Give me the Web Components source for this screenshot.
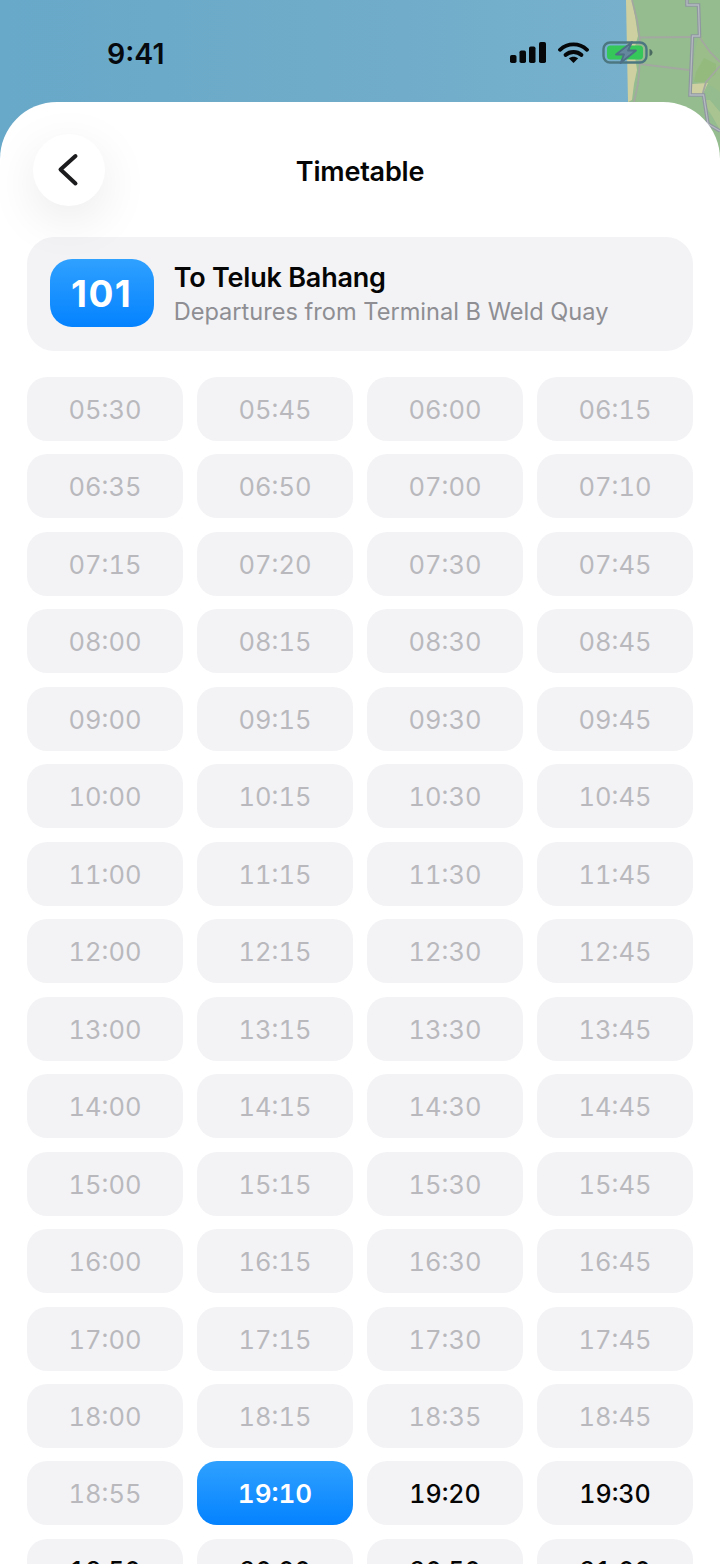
<!DOCTYPE html>
<html lang="en">
<head>
<meta charset="utf-8">
<title>Timetable</title>
<style>
  html, body { margin: 0; padding: 0; background: #fff; }
  body { font-family: Inter, "Noto Sans", sans-serif; }
</style>
</head>
<body>
<timetable-screen>
  <status-bar slot="status" time="9:41"></status-bar>
  <bottom-sheet slot="sheet">
    <sheet-nav title="Timetable"></sheet-nav>
    <route-card number="101" heading="To Teluk Bahang" detail="Departures from Terminal B Weld Quay"></route-card>
    <time-grid></time-grid>
  </bottom-sheet>
</timetable-screen>

<script>
// map behind the status bar, drawn in page coordinates
const mapSvg = `
<svg class="map" viewBox="0 0 720 190" width="720" height="190" aria-hidden="true">
  <defs>
    <linearGradient id="sea" x1="0" x2="1" y1="0" y2="0">
      <stop offset="0" stop-color="#68a8c8"/>
      <stop offset="1" stop-color="#78b1cc"/>
    </linearGradient>
  </defs>
  <rect width="720" height="190" fill="url(#sea)"/>
  <path d="M628 0H720V190H628Z" fill="#94bc8e"/>
  <path d="M626 0L632 0L635 16L638 36L634 50L637 70L634 84L632 100L628 102Z" fill="#cfd0a2"/>
  <path d="M700 30L706 46L712 52L720 60V92L708 84L700 86L694 80L692 72L696 46Z" fill="#a2bf85" opacity=".4"/>
  <path d="M696 72L704 58L716 64L716 74L704 82L694 82Z" fill="#92ba78" opacity=".7"/>
  <path d="M692 84L708 83L702 96L690 94Z" fill="#cfd0a2"/>
  <path d="M702 100L712 116L720 130V112L710 100Z" fill="#a9c391"/>
  <g fill="none" stroke="#a3a8a0" stroke-width="1.800">
    <path d="M632 0L637 20L640 40L640 62L638 84L634 102"/>
    <path d="M640 37.500L692 37"/>
    <path d="M640 64L689 70"/>
    <path d="M700 38L710 52L720 62"/>
    <path d="M720 66L706 82L702 96"/>
  </g>
  <path d="M687 0V5H698.500L699.500 36H692.500L690 95H703.500L708 124L720 131" fill="none" stroke="#8f96a0" stroke-width="3.600"/>
  <path d="M687 0V5H698.500L699.500 36H692.500L690 95H703.500L708 124L720 131" fill="none" stroke="#b5bac0" stroke-width="1.300"/>
</svg>`

customElements.define('timetable-screen', class extends HTMLElement {
  constructor () {
    super()
    this.attachShadow({ mode: 'open' })
    this.shadowRoot.innerHTML = `
<style>
  :host { display: block; position: relative; width: 720px; height: 1564px; overflow: hidden; background: #fff; }
  .map { position: absolute; top: 0; left: 0; display: block; }
  .content { position: relative; display: flex; flex-direction: column; height: 100%; }
</style>
${mapSvg}
<div class="content">
  <slot name="status"></slot>
  <slot name="sheet"></slot>
</div>`
  }
})

customElements.define('status-bar', class extends HTMLElement {
  constructor () {
    super()
    this.attachShadow({ mode: 'open' })
    this.shadowRoot.innerHTML = `
<style>
  :host { display: flex; flex: none; height: 102px; box-sizing: border-box; padding: 42px 67px 0 107px; justify-content: space-between; align-items: flex-start; }
  .time { font-size: 28.500px; line-height: 23px; font-weight: 600; color: #060a0e; }
  .icons { display: flex; align-items: flex-start; }
  svg { display: block; flex: none; }
  .wifi { margin-left: 12px; }
  .battery { margin-left: 13px; margin-top: -1px; }
</style>
<span class="time">${this.getAttribute('time')}</span>
<div class="icons">
  <svg width="36" height="21" viewBox="0 0 36 21" fill="#050709">
    <rect x="0" y="13" width="6.500" height="8" rx="1.800"/>
    <rect x="9.500" y="8.500" width="6.500" height="12.500" rx="1.800"/>
    <rect x="19" y="4.500" width="6.500" height="16.500" rx="1.800"/>
    <rect x="29" y="0" width="7" height="21" rx="1.800"/>
  </svg>
  <svg class="wifi" width="31" height="21" viewBox="0 0 31 21" fill="none" stroke="#050709">
    <path d="M2 7.800C9.600 .6 21.400 .6 29 7.800" stroke-width="3.800" stroke-linecap="round"/>
    <path d="M7.500 13C12 9 19 9 23.500 13" stroke-width="3.800" stroke-linecap="round"/>
    <path d="M10.800 16.300C13.500 14.200 17.500 14.200 20.200 16.300L15.500 21Z" fill="#050709" stroke="none"/>
  </svg>
  <svg class="battery" width="51" height="23" viewBox="0 0 51 23">
    <rect x="1.500" y="1.500" width="43" height="20" rx="6.500" fill="none" stroke="#4c7781" stroke-width="2.400"/>
    <rect x="5" y="4.500" width="36" height="14" rx="3.500" fill="#35c759"/>
    <path d="M47.500 8V15C49.500 14.500 50.500 13 50.500 11.500C50.500 10 49.500 8.500 47.500 8Z" fill="#4b6a60"/>
    <path d="M30 1L14 13.500H22L18.500 22L34 9.500H26Z" fill="#64899f" stroke="#4e6f86" stroke-width="1.800" stroke-linejoin="round"/>
  </svg>
</div>`
  }
})

customElements.define('bottom-sheet', class extends HTMLElement {
  constructor () {
    super()
    this.attachShadow({ mode: 'open' })
    this.shadowRoot.innerHTML = `
<style>
  :host { display: block; flex: 1; min-height: 0; box-sizing: border-box; padding: 32px 26.670px 0; background: #fff; border-radius: 57px 57px 0 0; }
</style>
<slot></slot>`
  }
})

customElements.define('sheet-nav', class extends HTMLElement {
  constructor () {
    super()
    this.attachShadow({ mode: 'open' })
    this.shadowRoot.innerHTML = `
<style>
  :host { display: flex; position: relative; height: 72px; margin-bottom: 31px; align-items: center; justify-content: center; }
  .back { position: absolute; left: 6px; top: 0; width: 72px; height: 72px; padding: 0; border: 0; border-radius: 50%; background: #fff; box-shadow: 0 14px 50px rgba(0, 0, 0, .085); display: flex; align-items: center; justify-content: center; }
  h1 { margin: 4px 0 0; font-size: 27px; line-height: 34px; font-weight: 600; color: #050505; letter-spacing: -.2px; }
  svg { display: block; }
</style>
<button class="back" aria-label="Back">
  <svg width="24" height="36" viewBox="0 0 24 36" fill="none" stroke="#1c1c1e" stroke-width="4" stroke-linecap="round" stroke-linejoin="round">
    <path d="M18.500 4L3.500 17.500L18.500 31.500"/>
  </svg>
</button>
<h1>${this.getAttribute('title')}</h1>`
  }
})

customElements.define('route-card', class extends HTMLElement {
  constructor () {
    super()
    this.attachShadow({ mode: 'open' })
    this.shadowRoot.innerHTML = `
<style>
  :host { display: flex; height: 113.500px; box-sizing: border-box; padding: 0 23px 1px; margin-bottom: 26.400px; align-items: center; gap: 20px; background: #f3f3f6; border-radius: 27px; }
  .badge { flex: none; width: 104px; height: 68px; border-radius: 22px; background: linear-gradient(#2fa1ff, #0482ff); color: #fff; font-size: 37px; font-weight: 700; letter-spacing: 1.500px; display: flex; align-items: center; justify-content: center; }
  .text { display: flex; flex-direction: column; min-width: 0; padding-top: 2px; }
  .heading { font-size: 27px; line-height: 33px; font-weight: 600; color: #050505; letter-spacing: -.2px; }
  .detail { margin-top: 2px; font-size: 23.600px; line-height: 32px; color: #8e8e93; white-space: nowrap; }
</style>
<div class="badge">${this.getAttribute('number')}</div>
<div class="text">
  <span class="heading">${this.getAttribute('heading')}</span>
  <span class="detail">${this.getAttribute('detail')}</span>
</div>`
  }
})

customElements.define('time-chip', class extends HTMLElement {
  constructor () {
    super()
    this.attachShadow({ mode: 'open' })
    this.shadowRoot.innerHTML = `
<style>
  :host { display: flex; height: 64px; box-sizing: border-box; padding-top: 1px; align-items: center; justify-content: center; background: #f3f3f6; border-radius: 20px; font-size: 25px; color: #050505; font-weight: 500; font-variant-numeric: tabular-nums; }
  :host([state="past"]) { color: #b9b9bd; font-weight: 400; font-size: 25.500px; }
  :host([state="next"]) { color: #fff; font-weight: 600; font-size: 26px; background: linear-gradient(#2fa1ff, #0482ff); }
</style>
<slot></slot>`
  }
})

const departures = [
  '05:30', '05:45', '06:00', '06:15',
  '06:35', '06:50', '07:00', '07:10',
  '07:15', '07:20', '07:30', '07:45',
  '08:00', '08:15', '08:30', '08:45',
  '09:00', '09:15', '09:30', '09:45',
  '10:00', '10:15', '10:30', '10:45',
  '11:00', '11:15', '11:30', '11:45',
  '12:00', '12:15', '12:30', '12:45',
  '13:00', '13:15', '13:30', '13:45',
  '14:00', '14:15', '14:30', '14:45',
  '15:00', '15:15', '15:30', '15:45',
  '16:00', '16:15', '16:30', '16:45',
  '17:00', '17:15', '17:30', '17:45',
  '18:00', '18:15', '18:35', '18:45',
  '18:55', '19:10', '19:20', '19:30',
  '19:50', '20:00', '20:50', '21:00'
]

customElements.define('time-grid', class extends HTMLElement {
  constructor () {
    super()
    this.attachShadow({ mode: 'open' })
    this.shadowRoot.innerHTML = `
<style>
  :host { display: grid; grid-template-columns: repeat(4, 1fr); column-gap: 13.330px; row-gap: 13.470px; }
</style>
<slot></slot>`
    const next = departures.indexOf('19:10')
    departures.forEach((time, i) => {
      const chip = document.createElement('time-chip')
      chip.textContent = time
      if (i < next) chip.setAttribute('state', 'past')
      if (i === next) chip.setAttribute('state', 'next')
      this.append(chip)
    })
  }
})
</script>
</body>
</html>
